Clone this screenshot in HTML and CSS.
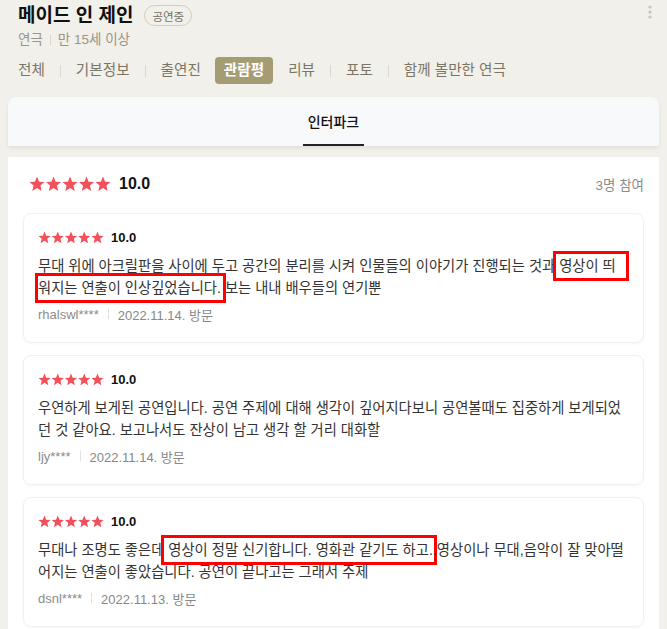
FILE: index.html
```html
<!DOCTYPE html>
<html lang="ko">
<head>
<meta charset="utf-8">
<title>메이드 인 제인 - 관람평</title>
<link rel="stylesheet" href="styles.css">
</head>
<body>
<svg class="defs" width="0" height="0" aria-hidden="true">
  <defs>
    <symbol id="star" viewBox="0 0 16 16">
      <polygon points="8,0.6 10.1,5.7 15.5,6.1 11.4,9.6 12.7,15 8,12.1 3.3,15 4.6,9.6 0.5,6.1 5.9,5.7"/>
    </symbol>
  </defs>
</svg>

<header class="head">
  <div class="title-row">
    <div class="title-wrap">
      <h1 class="title">메이드 인 제인</h1>
      <span class="badge">공연중</span>
    </div>
    <svg class="kebab" width="4" height="14" viewBox="0 0 4 14"><circle cx="2" cy="2" r="1.6"/><circle cx="2" cy="7" r="1.6"/><circle cx="2" cy="12" r="1.6"/></svg>
  </div>
  <div class="sub">연극<span class="vsep"></span>만 15세 이상</div>
  <nav class="tabs">
    <span class="tab">전체</span><span class="tsep"></span>
    <span class="tab">기본정보</span><span class="tsep"></span>
    <span class="tab">출연진</span>
    <span class="tab active">관람평</span>
    <span class="tab">리뷰</span><span class="tsep"></span>
    <span class="tab">포토</span><span class="tsep"></span>
    <span class="tab">함께 볼만한 연극</span>
  </nav>
</header>

<div class="source-bar">
  <span class="source on">인터파크</span>
</div>

<main class="board">
  <div class="summary">
    <div class="score">
      <svg class="stars-lg" width="82" height="16" viewBox="0 0 82 16">
        <use href="#star" x="0" y="0" width="16" height="16"/>
        <use href="#star" x="16.5" y="0" width="16" height="16"/>
        <use href="#star" x="33" y="0" width="16" height="16"/>
        <use href="#star" x="49.5" y="0" width="16" height="16"/>
        <use href="#star" x="66" y="0" width="16" height="16"/>
      </svg>
      <span class="score-num">10.0</span>
    </div>
    <span class="count">3명 참여</span>
  </div>

  <div class="reviews">
    <article class="review">
      <div class="rating">
        <svg class="stars-sm" width="66" height="13" viewBox="0 0 66 13">
          <use href="#star" x="0" y="0" width="13" height="13"/>
          <use href="#star" x="13.25" y="0" width="13" height="13"/>
          <use href="#star" x="26.5" y="0" width="13" height="13"/>
          <use href="#star" x="39.75" y="0" width="13" height="13"/>
          <use href="#star" x="53" y="0" width="13" height="13"/>
        </svg>
        <span class="rating-num">10.0</span>
      </div>
      <p class="text">무대 위에 아크릴판을 사이에 두고 공간의 분리를 시켜 인물들의 이야기가 진행되는 것과 <span class="mark m1">영상이 띄</span><br><span class="mark m2">워지는 연출이 인상깊었습니다</span>. 보는 내내 배우들의 연기뿐</p>
      <div class="meta"><span class="user">rhalswl****</span><span class="msep"></span><span class="date">2022.11.14. 방문</span></div>
    </article>

    <article class="review">
      <div class="rating">
        <svg class="stars-sm" width="66" height="13" viewBox="0 0 66 13">
          <use href="#star" x="0" y="0" width="13" height="13"/>
          <use href="#star" x="13.25" y="0" width="13" height="13"/>
          <use href="#star" x="26.5" y="0" width="13" height="13"/>
          <use href="#star" x="39.75" y="0" width="13" height="13"/>
          <use href="#star" x="53" y="0" width="13" height="13"/>
        </svg>
        <span class="rating-num">10.0</span>
      </div>
      <p class="text">우연하게 보게된 공연입니다. 공연 주제에 대해 생각이 깊어지다보니 공연볼때도 집중하게 보게되었<br>던 것 같아요. 보고나서도 잔상이 남고 생각 할 거리 대화할</p>
      <div class="meta"><span class="user">ljy****</span><span class="msep"></span><span class="date">2022.11.14. 방문</span></div>
    </article>

    <article class="review">
      <div class="rating">
        <svg class="stars-sm" width="66" height="13" viewBox="0 0 66 13">
          <use href="#star" x="0" y="0" width="13" height="13"/>
          <use href="#star" x="13.25" y="0" width="13" height="13"/>
          <use href="#star" x="26.5" y="0" width="13" height="13"/>
          <use href="#star" x="39.75" y="0" width="13" height="13"/>
          <use href="#star" x="53" y="0" width="13" height="13"/>
        </svg>
        <span class="rating-num">10.0</span>
      </div>
      <p class="text">무대나 조명도 좋은데 <span class="mark m3">영상이 정말 신기합니다. 영화관 같기도 하고.</span>.영상이나 무대,음악이 잘 맞아떨<br>어지는 연출이 좋았습니다. 공연이 끝나고는 그래서 주제</p>
      <div class="meta"><span class="user">dsnl****</span><span class="msep"></span><span class="date">2022.11.13. 방문</span></div>
    </article>
  </div>
</main>
</body>
</html>
```

FILE: styles.css
```css
* { box-sizing: border-box; }

html, body {
  margin: 0;
  padding: 0;
}

body {
  background: #f1f0ea;
  font-family: "Liberation Sans", "Noto Sans CJK KR", sans-serif;
  color: #222;
  overflow: hidden;
}

.defs { position: absolute; width: 0; height: 0; overflow: hidden; }

/* ---------- header ---------- */
.head {
  padding: 4px 15px 0 18px;
}

.title-row {
  display: flex;
  justify-content: space-between;
  align-items: flex-start;
}

.title-wrap {
  display: flex;
  align-items: center;
  gap: 11px;
  height: 24px;
}

.title {
  margin: 0;
  font-size: 19px;
  line-height: 24px;
  font-weight: 700;
  color: #111;
}

.badge {
  display: inline-flex;
  align-items: center;
  height: 21px;
  padding: 0 7px;
  border: 1px solid #d2cebe;
  border-radius: 11px;
  font-size: 11.5px;
  color: #76705f;
  margin-top: -1px;
}

.kebab {
  margin-top: 1px;
  fill: #c8c5b9;
}

.sub {
  margin-top: 3px;
  height: 18px;
  line-height: 18px;
  font-size: 13.5px;
  color: #9a9587;
  display: flex;
  align-items: center;
}

.vsep {
  display: inline-block;
  width: 1px;
  height: 10px;
  background: #d9d5c8;
  margin: 0 7px;
}

.tabs {
  margin-top: 8px;
  display: flex;
  align-items: center;
  gap: 15px;
  height: 27px;
}

.tab {
  font-size: 14.6px;
  color: #7b7565;
  line-height: 27px;
}

.tab.active {
  background: #a59c74;
  color: #fff;
  font-weight: 700;
  border-radius: 4px;
  padding: 0 9px;
  margin-left: -1px;
}

.tsep {
  width: 1px;
  height: 12px;
  background: #dcd8cc;
}

/* ---------- source bar ---------- */
.source-bar {
  margin: 13px 8px 0;
  height: 49px;
  background: #f8f9fb;
  border-radius: 8px 8px 0 0;
  box-shadow: 0 2px 4px rgba(0, 0, 0, 0.07);
  display: flex;
  justify-content: center;
}

.source {
  display: flex;
  align-items: center;
  padding: 0 5px;
  font-size: 14px;
  font-weight: 500;
  color: #111;
}

.source.on {
  border-bottom: 2px solid #222;
}

/* ---------- board ---------- */
.board {
  margin: 11px 8px 0;
  background: #fff;
  padding: 17px 15px 20px;
}

.summary {
  display: flex;
  justify-content: space-between;
  align-items: center;
  height: 20px;
  padding-left: 6px;
}

.score {
  display: flex;
  align-items: center;
}

.stars-lg, .stars-sm { fill: #f2505a; display: block; }

.score-num {
  margin-left: 8px;
  font-size: 16px;
  font-weight: 700;
  color: #111;
}

.count {
  font-size: 13.5px;
  color: #8d8d8d;
}

.reviews {
  margin-top: 19px;
  display: flex;
  flex-direction: column;
  gap: 12px;
}

.review {
  height: 130px;
  border: 1px solid #f1f1f1;
  border-radius: 8px;
  box-shadow: 0 1px 3px rgba(0, 0, 0, 0.04);
  padding: 15px 14px 0;
}

.rating {
  display: flex;
  align-items: center;
  height: 16px;
}

.rating-num {
  margin-left: 7px;
  font-size: 13px;
  font-weight: 700;
  color: #111;
}

.text {
  margin: 10px 0 0;
  font-size: 14.3px;
  line-height: 22px;
  color: #333;
  white-space: nowrap;
}

/* red annotation boxes drawn around phrases */
.mark {
  padding-top: 4px;
  padding-bottom: 4px;
  box-shadow: 0 0 0 3px #f00;
}

.m1 { padding-left: 3px; margin-left: -3px; padding-right: 10px; margin-right: -10px; }
.m2 { padding-left: 0; padding-right: 6px; margin-right: -6px; }
.m3 { padding-left: 4px; margin-left: -4px; padding-right: 1px; margin-right: -1px; }

.meta {
  margin-top: 6px;
  height: 18px;
  display: flex;
  align-items: center;
  font-size: 13px;
}

.user { color: #8c8c8c; }

.msep {
  width: 1px;
  height: 10px;
  background: #e1e1e1;
  margin: 0 9px;
}

.date { color: #888; }
```
